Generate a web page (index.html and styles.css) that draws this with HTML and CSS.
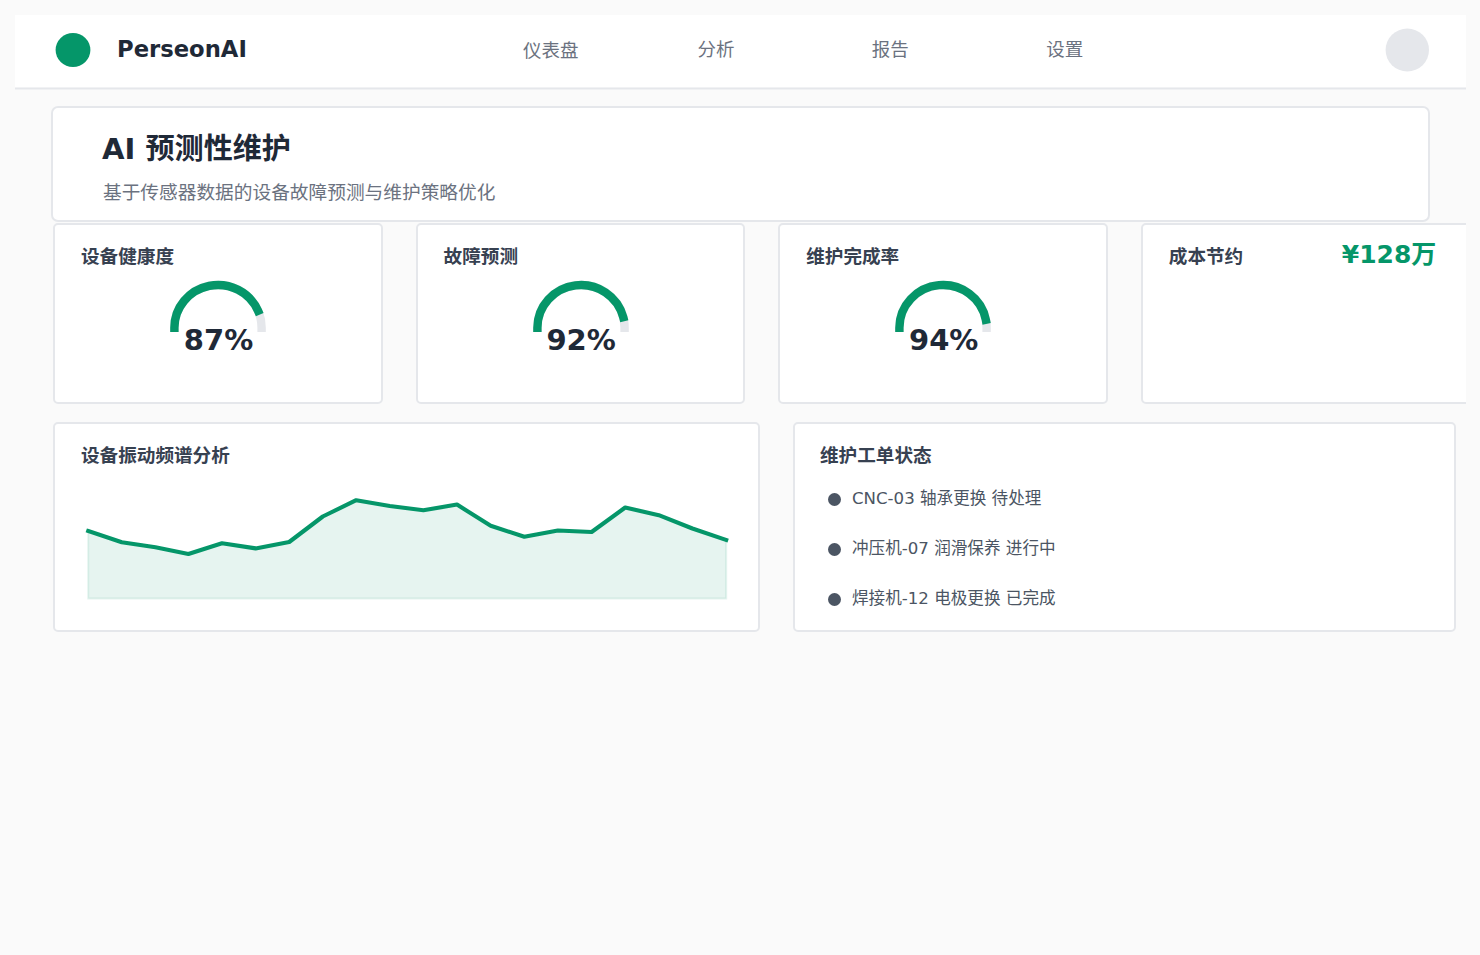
FILE: index.html
```html
<!DOCTYPE html>
<html lang="zh-CN">
<head>
<meta charset="utf-8">
<title>PerseonAI</title>
<link rel="stylesheet" href="styles.css">
</head>
<body>
<div class="frame">
  <header class="topbar">
    <svg class="logo" viewBox="0 0 36 36"><ellipse cx="18" cy="18" rx="17.4" ry="17.1"/></svg>
    <div class="brand">PerseonAI</div>
    <nav class="nav">
      <a class="low">仪表盘</a><a>分析</a><a>报告</a><a>设置</a>
    </nav>
    <svg class="avatar" viewBox="0 0 44 44"><ellipse cx="22.3" cy="22" rx="21.7" ry="21.4"/></svg>
  </header>
  <section class="hero">
    <h1>AI 预测性维护</h1>
    <p>基于传感器数据的设备故障预测与维护策略优化</p>
  </section>
  <section class="stats">
    <article class="card">
      <h2>设备健康度</h2>
      <svg class="gauge" viewBox="0 0 100 56">
        <path class="track" d="M6.4 49.8A43.6 42.8 0 0 1 93.6 49.8"/>
        <path class="value" d="M6.4 49.8A43.6 42.8 0 0 1 90.01 32.8"/>
      </svg>
      <div class="percent">87%</div>
    </article>
    <article class="card">
      <h2>故障预测</h2>
      <svg class="gauge" viewBox="0 0 100 56">
        <path class="track" d="M6.4 49.8A43.6 42.8 0 0 1 93.6 49.8"/>
        <path class="value" d="M6.4 49.8A43.6 42.8 0 0 1 92.23 39.16"/>
      </svg>
      <div class="percent">92%</div>
    </article>
    <article class="card">
      <h2>维护完成率</h2>
      <svg class="gauge" viewBox="0 0 100 56">
        <path class="track" d="M6.4 49.8A43.6 42.8 0 0 1 93.6 49.8"/>
        <path class="value" d="M6.4 49.8A43.6 42.8 0 0 1 92.83 41.78"/>
      </svg>
      <div class="percent">94%</div>
    </article>
    <article class="card saving">
      <h2>成本节约</h2>
      <div class="amount">¥128万</div>
    </article>
  </section>
  <section class="details">
    <article class="card spectrum">
      <h2>设备振动频谱分析</h2>
      <svg class="chart" viewBox="80 490 656 116">
        <path class="area" d="M88.2 531L121.8 542.3L155.4 547.3L188.4 554L222 543.3L255.6 548.4L289.2 542L322.8 516.5L356.2 500.2L389.8 506L423.4 510.2L457 504.6L490.7 525.8L524.3 536.8L557.9 530.5L591.6 532L625.2 507.5L658.8 515.2L692.4 528.5L726.2 540V598.6H88.2Z"/>
        <path class="line" d="M88.2 531L121.8 542.3L155.4 547.3L188.4 554L222 543.3L255.6 548.4L289.2 542L322.8 516.5L356.2 500.2L389.8 506L423.4 510.2L457 504.6L490.7 525.8L524.3 536.8L557.9 530.5L591.6 532L625.2 507.5L658.8 515.2L692.4 528.5L726.2 540"/>
      </svg>
    </article>
    <article class="card orders">
      <h2>维护工单状态</h2>
      <ul>
        <li>CNC-03 轴承更换 待处理</li>
        <li>冲压机-07 润滑保养 进行中</li>
        <li>焊接机-12 电极更换 已完成</li>
      </ul>
    </article>
  </section>
</div>
</body>
</html>
```
FILE: styles.css
```css
* { box-sizing: border-box; }
body {
  margin: 0;
  height: 955px;
  padding: 15px 14px 0 15px;
  overflow: hidden;
  background: #fafafa;
  color: #1f2937;
  font-family: "DejaVu Sans", "Noto Sans CJK SC", sans-serif;
}
h1, h2, p, ul { margin: 0; padding: 0; }
.frame { width: 1451px; height: 940px; overflow: hidden; }

.topbar {
  display: flex;
  align-items: center;
  height: 75px;
  padding: 0 37px 5px 40px;
  background: linear-gradient(#fff 72px, #f1f2f4 72px, #f1f2f4 73px, #e5e7eb 73px, #e5e7eb 74px, #f0f1f3 74px);
}
.logo { width: 36px; height: 36px; fill: #059669; }
.brand { width: 379px; margin-left: 26px; padding-bottom: 2px; font-size: 22.7px; font-weight: 700; line-height: 30px; white-space: nowrap; }
.nav { display: grid; grid-template-columns: repeat(4, 174.4px); margin-left: 27px; }
.nav a { font-size: 18.5px; line-height: 28px; color: #6b7280; }
.nav .low { padding-top: 1px; margin-bottom: -1px; }
.avatar { width: 44px; height: 44px; margin-left: auto; fill: #e5e7eb; }

.hero {
  width: 1379px;
  height: 116px;
  margin: 16px 0 0 36px;
  padding: 22px 0 0 49px;
  border: 2px solid #e5e7eb;
  border-radius: 7px;
  background: #fff;
}
.hero h1 { font-size: 29.1px; line-height: 38px; }
.hero p { margin-top: 11px; font-size: 18.7px; line-height: 28px; color: #6b7280; padding-left: 1px; }

.stats { display: grid; grid-template-columns: repeat(4, 329.6px); column-gap: 33px; margin: 1px 0 0 38px; }
.card { height: 181px; padding: 19px 0 0 26px; border: 2px solid #e5e7eb; border-radius: 5px; background: #fff; }
.card h2 { font-size: 18.6px; line-height: 26px; color: #374151; }
.gauge { display: block; width: 100px; height: 56px; margin: 8px 0 0 87px; }
.gauge path { fill: none; stroke-width: 8.4; stroke-linecap: square; }
.gauge .track { stroke: #e5e7eb; }
.gauge .value { stroke: #059669; }
.percent { width: 275px; margin-top: -13px; text-align: center; font-size: 29px; font-weight: 700; line-height: 38px; position: relative; }
.saving { display: flex; align-items: flex-start; }
.amount { margin: -5px 0 0 98.6px; font-size: 25px; font-weight: 700; line-height: 32px; color: #059669; white-space: nowrap; }

.details { display: grid; grid-template-columns: 707px 663px; column-gap: 33px; margin: 18px 0 0 38px; }
.details .card { height: 210px; }
.details .orders { padding-left: 25px; }
.chart { display: block; width: 656px; height: 116px; margin: 21px 0 0 -1px; }
.chart .area { fill: #059669; fill-opacity: .1; stroke: #059669; stroke-opacity: .1; stroke-width: 2; }
.chart .line { fill: none; stroke: #059669; stroke-width: 4.1; stroke-linecap: square; stroke-linejoin: round; }
.orders ul { list-style: none; margin-top: 5px; }
.orders li { display: flex; align-items: center; height: 50px; font-size: 16.6px; color: #4b5563; line-height: 24px; }
.orders li::before { content: ""; width: 13px; height: 13px; margin: 1px 11px 0 8px; border-radius: 50%; background: #4b5563; }
```
